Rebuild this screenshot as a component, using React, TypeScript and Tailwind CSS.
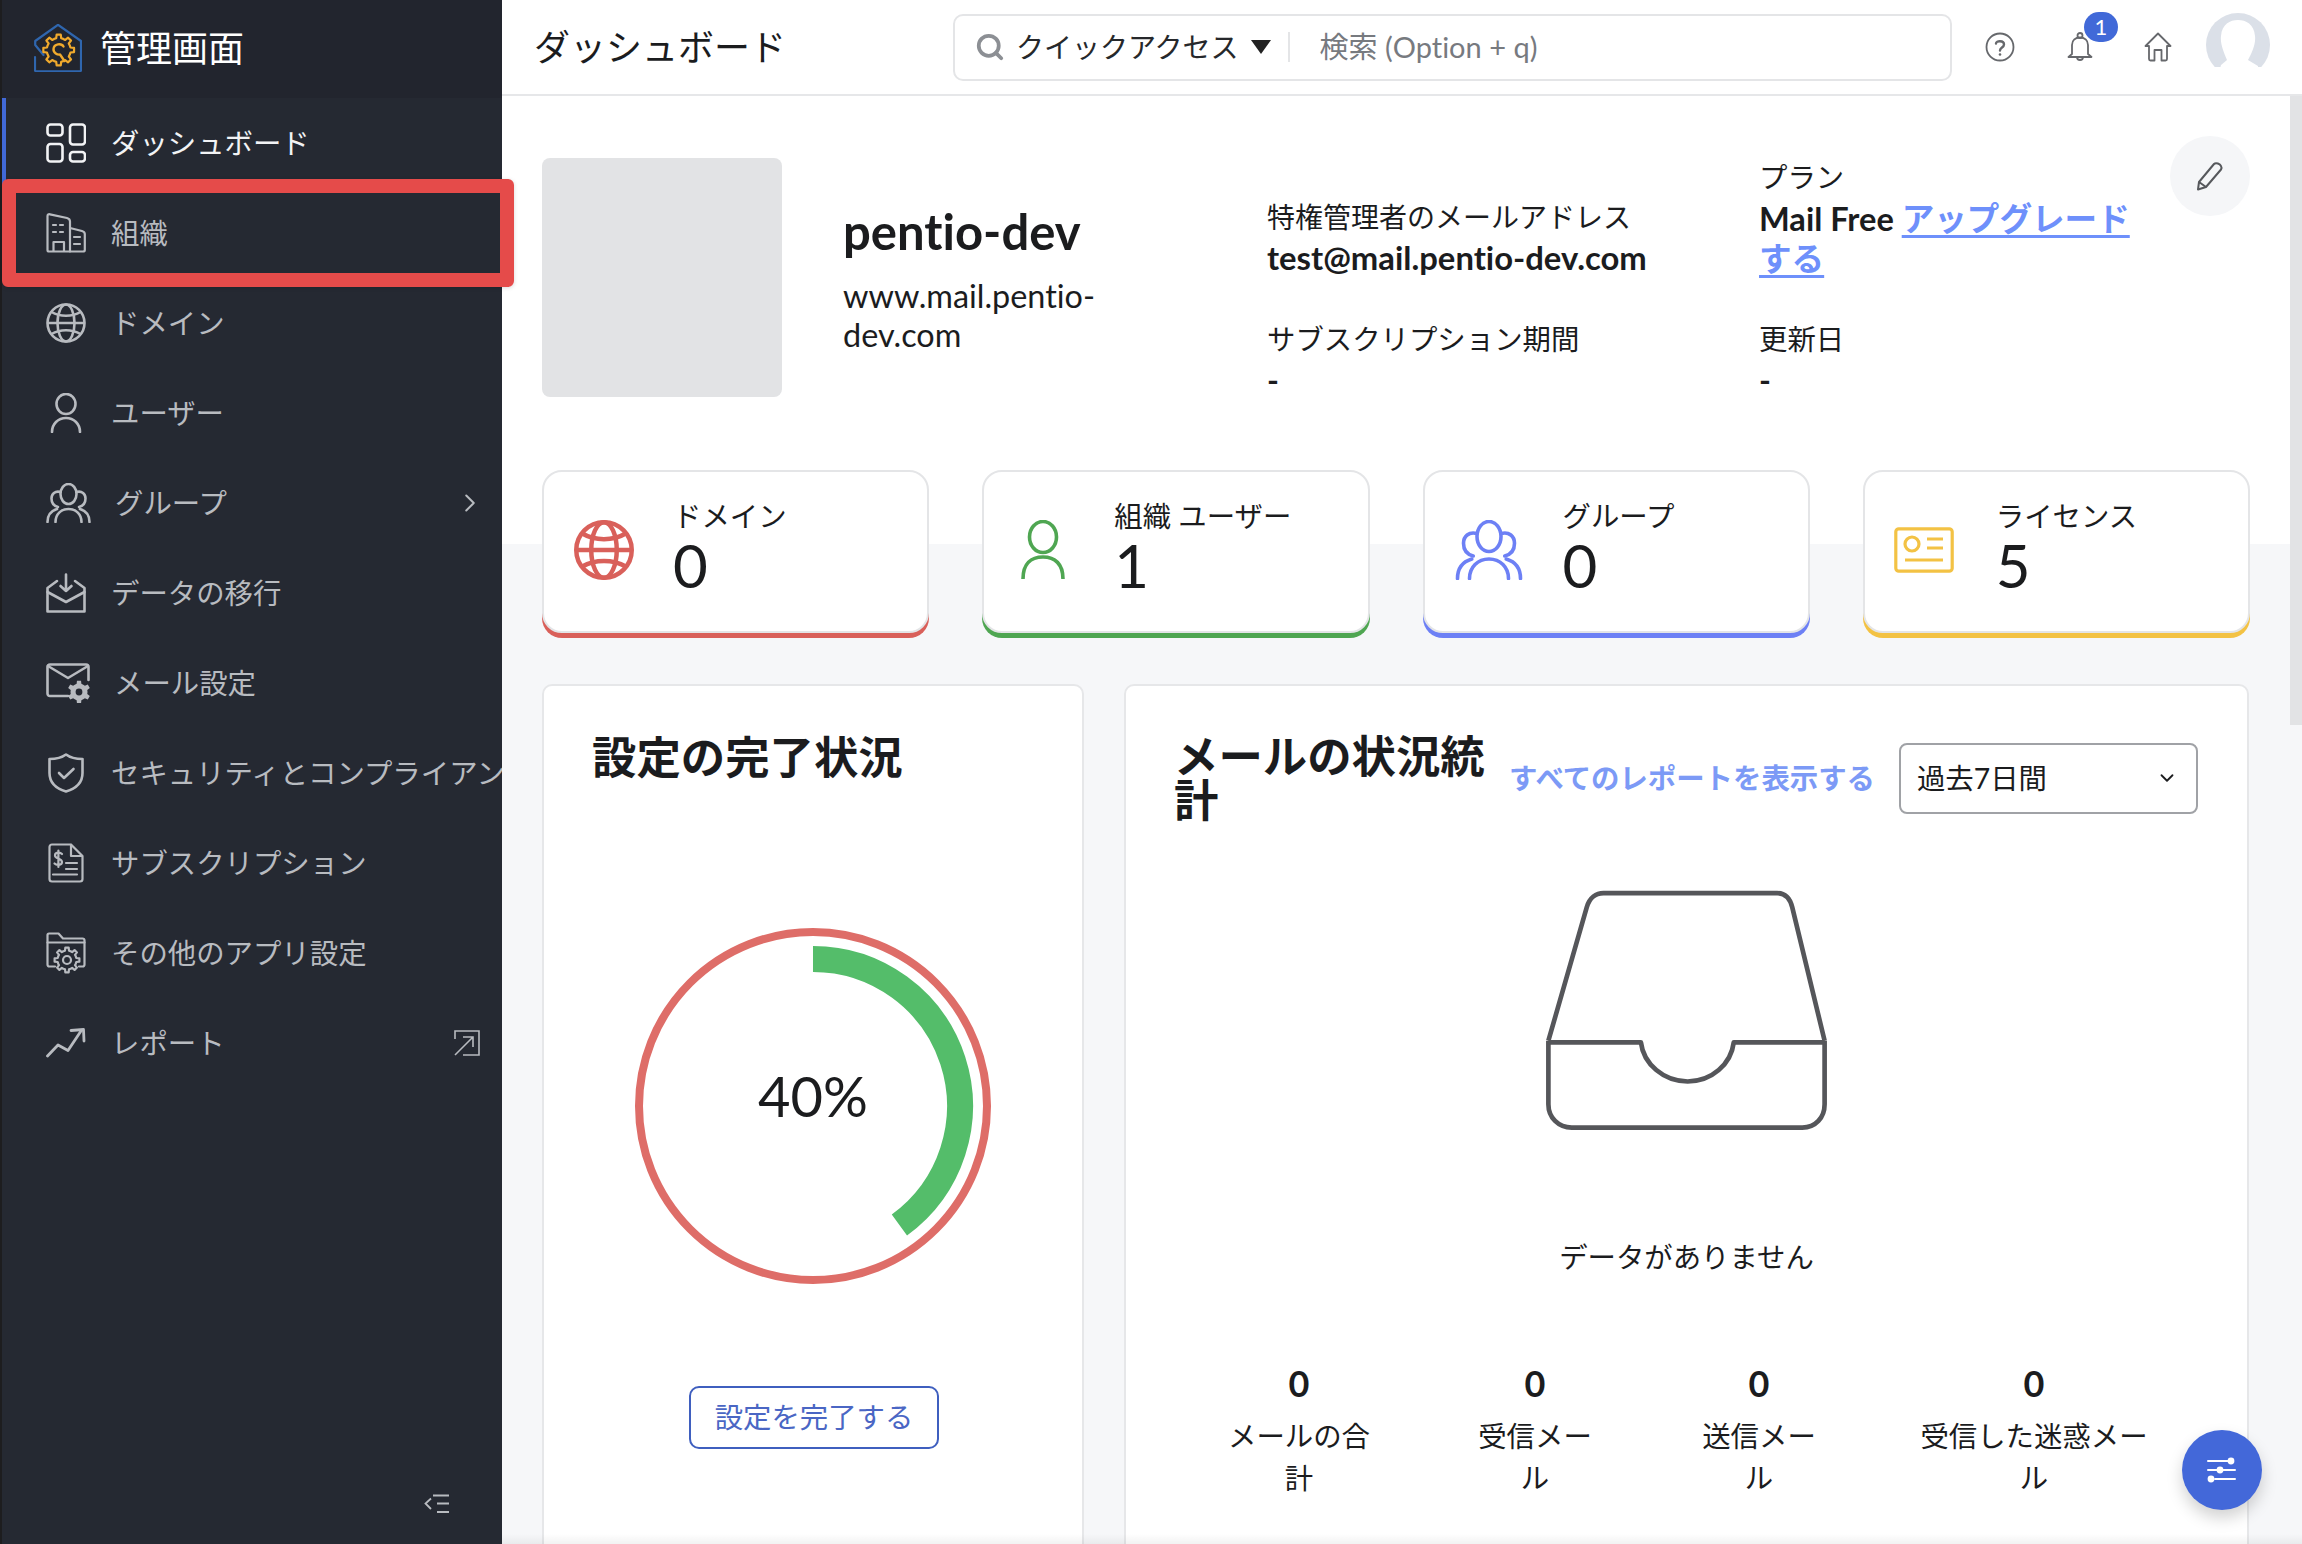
import React from 'react';
import { ChevronDown, ChevronRight, Search } from 'lucide-react';

type IconProps = { className?: string };

const gearPath = (cx: number, cy: number, outer: number, inner: number, teeth: number) => {
  const pts: string[] = [];
  const step = (Math.PI * 2) / teeth;
  for (let i = 0; i < teeth; i++) {
    const a = i * step;
    [
      [a - step * 0.5, inner],
      [a - step * 0.27, inner],
      [a - step * 0.17, outer],
      [a + step * 0.17, outer],
      [a + step * 0.27, inner],
    ].forEach(([ang, r]) => {
      pts.push(`${(cx + r * Math.sin(ang)).toFixed(2)} ${(cy - r * Math.cos(ang)).toFixed(2)}`);
    });
  }
  return `M${pts.join(' L')} Z`;
};

const Svg = ({ className, w = 40, h = 40, sw = 2.6, children }: IconProps & { w?: number; h?: number; sw?: number; children: React.ReactNode }) => (
  <svg width={w} height={h} viewBox={`0 0 ${w} ${h}`} fill="none" stroke="currentColor" strokeWidth={sw} strokeLinecap="round" strokeLinejoin="round" className={className}>
    {children}
  </svg>
);

const DashIcon = () => (
  <Svg>
    <rect x="1.5" y="1.5" width="15" height="11" rx="3" />
    <rect x="24" y="1.5" width="15" height="20" rx="3" />
    <rect x="1.5" y="21" width="15" height="17.5" rx="3" />
    <rect x="24" y="29" width="15" height="9.5" rx="3" />
  </Svg>
);

const BuildingIcon = () => (
  <Svg sw={2.2}>
    <path d="M1.5 3 C1.5 1.5 2.5 1 4 1.3 L21 5 C23 5.5 24 6.5 24 8.5 L24 38.5 L3 38.5 C2 38.5 1.5 38 1.5 37 Z" />
    <path d="M24 15 L36 18 C38 18.6 38.8 19.5 38.8 21 L38.8 37 C38.8 38 38 38.5 37 38.5 L24 38.5" />
    <path d="M7.5 38 V29 H18 V38" />
    <path d="M7 12 H10 M14 12 H17 M7 19 H10 M14 19 H17 M28 24 H34 M28 31 H34" />
  </Svg>
);

const GlobeIcon = ({ sw = 2.6, size = 40 }: { sw?: number; size?: number }) => (
  <svg width={size} height={size} viewBox="0 0 40 40" fill="none" stroke="currentColor" strokeWidth={sw}>
    <circle cx="20" cy="20" r="18.5" />
    <ellipse cx="20" cy="20" rx="8.5" ry="18.5" />
    <path d="M1.5 20 H38.5 M5.5 9 C14 14 26 14 34.5 9 M5.5 31 C14 26 26 26 34.5 31" />
  </svg>
);

const UserIcon = () => (
  <svg width="40" height="40" viewBox="0 0 40 40" fill="none" stroke="currentColor" strokeWidth="2.6" strokeLinecap="round">
    <ellipse cx="20" cy="11" rx="9.5" ry="10" />
    <path d="M6 39 C6 31 12 25 20 25 C28 25 34 31 34 39" />
  </svg>
);

const GroupIcon = ({ sw = 2.6, w = 45, h = 40 }: { sw?: number; w?: number; h?: number }) => (
  <svg width={w} height={h} viewBox="0 0 45 40" fill="none" stroke="currentColor" strokeWidth={sw} strokeLinecap="round">
    <ellipse cx="22.5" cy="11" rx="8" ry="10" />
    <path d="M14.5 9 C9 7.5 5.5 11 5.5 15.5 C5.5 20 8 23 12 24 M30.5 9 C36 7.5 39.5 11 39.5 15.500 C39.5 20 37 23 33 24" />
    <path d="M9.5 39 C9.5 31.5 15 26 22.5 26 C30 26 35.5 31.5 35.5 39" />
    <path d="M1.5 39 C1.5 33 4.5 28 11 26 M43.5 39 C43.5 33 40.5 28 34 26" />
  </svg>
);

const MigrateIcon = () => (
  <Svg>
    <path d="M20 1.5 V18 M14.5 13 L20 18 L25.5 13" />
    <path d="M11 8 L1.5 15 V38.5 H38.5 V15 L29 8" />
    <path d="M1.5 19 L20 29 L38.5 19" />
  </Svg>
);

const MailGearIcon = () => (
  <svg width="45" height="40" viewBox="0 0 45 40" fill="none" stroke="currentColor" strokeWidth="2.6" strokeLinecap="round" strokeLinejoin="round">
    <path d="M22 33 H4 C2.5 33 1.5 32 1.5 30.5 V4 C1.5 2.5 2.5 1.5 4 1.5 H40 C41.5 1.5 42.5 2.5 42.5 4 V17" />
    <path d="M2 3 L22 15 L42 3" />
    <path d={gearPath(33, 29, 11.5, 8.5, 6)} fill="currentColor" stroke="none" />
    <circle cx="33" cy="29" r="3.4" fill="#252932" stroke="none" />
  </svg>
);

const ShieldIcon = () => (
  <Svg>
    <path d="M20 1.5 C24 4.5 29 6 36.5 6 V20 C36.5 29 30 35.5 20 38.5 C10 35.5 3.5 29 3.5 20 V6 C11 6 16 4.5 20 1.5 Z" />
    <path d="M13 20 L18 25 L27.5 16" />
  </Svg>
);

const BillIcon = () => (
  <Svg sw={2.2}>
    <path d="M25 1.5 H6 C4.500 1.5 3.500 2.500 3.500 4 V36 C3.500 37.500 4.500 38.500 6 38.500 H34 C35.500 38.500 36.500 37.500 36.500 36 V13 L25 1.500 V13 H36.500" />
    <path d="M16 11 C14 9 9 9 9 12.500 C9 16 16 15 16 19 C16 22.500 10.500 22.500 8.500 20.500 M12.400 7.500 V24" />
    <path d="M20 20 H31 M20 26 H31 M7 31.500 H31" />
  </Svg>
);

const FolderGearIcon = () => (
  <svg width="40" height="42" viewBox="0 0 40 42" fill="none" stroke="currentColor" strokeWidth="2.2" strokeLinecap="round" strokeLinejoin="round">
    <path d="M9 34.500 H3.500 C2.300 34.500 1.500 33.700 1.500 32.500 V3 C1.500 2 2 1.500 3 1.500 H12.500 L17 6.500 H36.500 C37.700 6.500 38.500 7.300 38.500 8.500 V32.500 C38.500 33.700 37.700 34.500 36.500 34.500 H33" />
    <path d="M1.500 10.500 H38.500" />
    <path d={gearPath(21, 28, 12.500, 9.500, 8)} fill="#252932" />
    <circle cx="21" cy="28" r="4" />
  </svg>
);

const TrendIcon = () => (
  <svg width="40" height="30" viewBox="0 0 40 30" fill="none" stroke="currentColor" strokeWidth="2.8" strokeLinecap="round" strokeLinejoin="round">
    <path d="M1.500 28 L12 17 L22 22.500 L35 3" />
    <path d="M25 2.500 L37.500 1.500 L38 13" />
  </svg>
);

const ExternalIcon = () => (
  <svg width="26" height="26" viewBox="0 0 26 26" fill="none" stroke="currentColor" strokeWidth="1.600">
    <path d="M1 9 V1 H25 V25 H9" />
    <path d="M1 25 L19 7 M9 7 H19 V17" />
  </svg>
);

const CollapseIcon = () => (
  <svg width="26" height="20" viewBox="0 0 26 20" fill="none" stroke="currentColor" strokeWidth="1.800">
    <path d="M7 4.500 L1.500 9.500 L7 15 M9 1.500 H25 M13 9.500 H25 M13 18 H25" />
  </svg>
);

const Logo = () => (
  <svg width="48" height="48" viewBox="0 0 48 48" fill="none" strokeLinecap="round" strokeLinejoin="round" className="shrink-0">
    <path d="M9.500 31 L1.200 21 V17 L24 0.800 L47 17 V46 C47 47 46.500 47.300 45.500 47.300 H2.500 C1.500 47.300 1 47 1 46 V33" stroke="#2f66ae" strokeWidth="2.200" />
    <path d={gearPath(24.700, 26, 15.500, 12, 8)} fill="#22252e" stroke="#f0aa2d" strokeWidth="2.200" />
    <path d="M29.500 22.500 C27.500 19 20 19.500 19.500 25 C19.300 29 23.500 31 26 30.500 L30.500 37" stroke="#f0aa2d" strokeWidth="2.400" />
  </svg>
);

const menu = [
  { label: 'ダッシュボード', icon: <DashIcon />, active: true },
  { label: '組織', icon: <BuildingIcon /> },
  { label: 'ドメイン', icon: <GlobeIcon /> },
  { label: 'ユーザー', icon: <UserIcon /> },
  { label: 'グループ', icon: <GroupIcon />, gap: 'ml-[29px]', right: <ChevronRight size={30} strokeWidth={1.6} />, rightCls: 'mr-[17px]' },
  { label: 'データの移行', icon: <MigrateIcon /> },
  { label: 'メール設定', icon: <MailGearIcon />, gap: 'ml-[28px]' },
  { label: 'セキュリティとコンプライアンス', icon: <ShieldIcon /> },
  { label: 'サブスクリプション', icon: <BillIcon /> },
  { label: 'その他のアプリ設定', icon: <FolderGearIcon /> },
  { label: 'レポート', icon: <TrendIcon />, gap: 'ml-[25px]', right: <ExternalIcon />, rightCls: 'mr-[22px]' },
];

const stats = [
  { label: 'ドメイン', value: '0', bar: 'shadow-[0_5px_0_0_#d9605a]', color: 'text-[#d9605a]', pad: 'pl-[30px]', gap: 'gap-[39px]', icon: <GlobeIcon sw={3} size={60} /> },
  {
    label: '組織 ユーザー',
    value: '1',
    bar: 'shadow-[0_5px_0_0_#4fa652]',
    color: 'text-[#4fa652]',
    pad: 'pl-[37px]',
    gap: 'gap-[49px]',
    icon: (
      <svg width="44" height="60" viewBox="0 0 44 60" fill="none" stroke="currentColor" strokeWidth="3.600">
        <ellipse cx="22" cy="17" rx="13.500" ry="15.500" />
        <path d="M2 59 C2 44 10 37 22 37 C34 37 42 44 42 59" />
      </svg>
    ),
  },
  { label: 'グループ', value: '0', bar: 'shadow-[0_5px_0_0_#6d80f5]', color: 'text-[#6d80f5]', pad: 'pl-[30px]', gap: 'gap-[40px]', icon: <GroupIcon sw={2.400} w={68} h={60} /> },
  {
    label: 'ライセンス',
    value: '5',
    bar: 'shadow-[0_5px_0_0_#f3c244]',
    color: 'text-[#f3c244]',
    pad: 'pl-[29px]',
    gap: 'gap-[42px]',
    icon: (
      <svg width="60" height="46" viewBox="0 0 60 46" fill="none" stroke="currentColor" strokeWidth="3.200">
        <rect x="1.800" y="1.800" width="56.400" height="42.400" rx="3" />
        <circle cx="18" cy="17" r="7" />
        <path d="M33 12 H49 M33 21 H49 M11 33 H49" />
      </svg>
    ),
  },
];

const mailStats = [
  { label: 'メールの合計', cls: 'w-[146px]' },
  { label: '受信メール', cls: 'w-[118px] ml-[104px]' },
  { label: '送信メール', cls: 'w-[118px] ml-[106px]' },
  { label: '受信した迷惑メール', cls: 'w-[230px] ml-[101px]' },
];

const App = () => {
  return (
    <div className="relative flex h-[1544px] w-[2302px] overflow-hidden bg-white font-['Lato','Noto_Sans_CJK_JP',sans-serif] text-[28.4px] text-[#1b1c1e] [font-variant-ligatures:none]">
      {/* Sidebar */}
      <aside className="flex h-full w-[502px] shrink-0 flex-col border-l-2 border-[#1d1d1f] bg-[#252932] text-[#b8bbc0]">
        <div className="flex h-[98px] shrink-0 items-center gap-[18px] bg-[#22252e] pb-[2px] pl-[32px] text-[36px] text-white">
          <Logo />
          <span>管理画面</span>
        </div>
        <nav className="flex-1 overflow-hidden">
          {menu.map((item) => (
            <div key={item.label} className={`flex h-[90px] items-center pl-[44px] ${item.active ? 'relative text-[#f2f3f5]' : ''}`}>
              {item.active && <div className="absolute bottom-0 left-0 top-0 w-[4px] bg-[#4169d8]" />}
              <span className="flex w-[40px] shrink-0 justify-start [&>svg]:shrink-0">{item.icon}</span>
              <span className={`whitespace-nowrap ${item.gap ?? 'ml-[25px]'}`}>{item.label}</span>
              {item.right && <span className={`ml-auto flex ${item.rightCls}`}>{item.right}</span>}
            </div>
          ))}
        </nav>
        <div className="flex justify-end pb-[30px] pr-[52px]">
          <CollapseIcon />
        </div>
      </aside>

      {/* Highlight annotation */}
      <div className="absolute left-[2px] top-[179px] h-[108px] w-[512px] rounded-[6px] border-[14px] border-[#e54b4a] shadow-[0_1px_4px_rgba(0,0,0,0.15)]" />

      <div className="flex h-full min-w-0 flex-1 flex-col">
        {/* Header */}
        <header className="flex h-[96px] shrink-0 items-center border-b-2 border-[#e6e7e9] pl-[32px]">
          <h1 className="w-[419px] text-[36px] font-normal">ダッシュボード</h1>
          <div className="flex h-[67px] w-[999px] items-center rounded-[10px] border-2 border-[#e4e5e7] pl-[20px]">
            <Search size={30} strokeWidth={3} className="text-[#8c8f94]" />
            <span className="ml-[11px] text-[28px] text-[#26282b]">クイックアクセス</span>
            <span className="ml-[12px] h-0 w-0 border-x-[10px] border-t-[14px] border-x-transparent border-t-[#222]" />
            <span className="ml-[17px] h-[30px] w-[2px] bg-[#e4e5e7]" />
            <span className="ml-[30px] text-[29px] text-[#777a7f]">検索 (Option + q)</span>
          </div>
          <svg width="30" height="30" viewBox="0 0 30 30" fill="none" stroke="#66686c" strokeWidth="1.800" strokeLinecap="round" className="ml-[33px] mt-[-1px]">
            <circle cx="15" cy="15" r="13.500" />
            <path d="M11 11.500 C11 8.500 19 8 19 12.500 C19 15.500 15 15.500 15 18.500" strokeWidth="2.400" />
            <circle cx="15" cy="22.500" r="1.300" fill="#66686c" stroke="none" />
          </svg>
          <div className="relative ml-[52px] h-[30px] w-[26px]">
            <svg width="26" height="30" viewBox="0 0 26 30" fill="none" stroke="#66686c" strokeWidth="1.800" strokeLinejoin="round">
              <circle cx="13" cy="3.500" r="2.500" />
              <path d="M5 22 V13 C5 8 8.500 5.500 13 5.500 C17.500 5.500 21 8 21 13 V22 L24.500 25 H1.500 Z" />
              <path d="M10 25 C10 29 16 29 16 25" />
            </svg>
            <span className="absolute left-[17px] top-[-20px] flex h-[30px] w-[34px] items-center justify-center rounded-full bg-[#4169d8] text-[22px] leading-none text-white">1</span>
          </div>
          <svg width="28" height="30" viewBox="0 0 28 30" fill="none" stroke="#66686c" strokeWidth="1.800" strokeLinejoin="round" className="ml-[51px]">
            <path d="M14 1.500 L1.500 14 H5 V27 C5 28 5.500 28.500 6.500 28.500 H10.500 V18 H17.500 V28.500 H21.500 C22.500 28.500 23 28 23 27 V14 H26.500 Z" />
          </svg>
          <svg width="64" height="54" viewBox="0 0 64 54" className="ml-[34px] mt-[-14px]">
            <circle cx="32" cy="32" r="32" fill="#dbe0e8" />
            <path d="M15 52 L21 47 C18 40 14 31 15 23 C16 11 24 7 32 7 C40 7 48 11 49 23 C50 31 46 40 42 47 L52 53 L52 64 L12 64 Z" fill="#fff" />
          </svg>
        </header>

        <div className="flex min-h-0 flex-1 bg-[linear-gradient(#fff_0,#fff_448px,#f6f7f9_448px)]">
          {/* Page content */}
          <main className="min-w-0 flex-1 overflow-hidden pl-[40px] pr-[40px] pt-[40px]">
            <section className="flex h-[261px]">
              <div className="mt-[22px] h-[239px] w-[240px] shrink-0 rounded-[8px] bg-[#e2e3e5]" />
              <div className="ml-[61px] mt-[68px] w-[300px]">
                <h2 className="text-[49px] font-bold leading-[54px]">pentio-dev</h2>
                <p className="mt-[18px] text-[32.4px] leading-[39px]">www.mail.pentio-dev.com</p>
              </div>
              <div className="ml-[124px] mt-[61px] w-[492px]">
                <p className="text-[28px] leading-[40px]">特権管理者のメールアドレス</p>
                <p className="mt-[1px] text-[32.8px] font-bold leading-[40px]">test@mail.pentio-dev.com</p>
                <p className="mt-[41px] leading-[40px]">サブスクリプション期間</p>
                <p className="mt-[1px] text-[32px] font-bold leading-[40px]">-</p>
              </div>
              <div className="mt-[21px] w-[390px]">
                <p className="leading-[40px]">プラン</p>
                <p className="mt-[2px] text-[32.6px] font-bold leading-[40px]">
                  Mail Free <a className="text-[#6e90fb] underline underline-offset-[4px]">アップグレードする</a>
                </p>
                <p className="mt-[40px] leading-[40px]">更新日</p>
                <p className="mt-[1px] text-[32px] font-bold leading-[40px]">-</p>
              </div>
              <button className="ml-auto flex h-[80px] w-[80px] shrink-0 items-center justify-center rounded-full bg-[#f5f6f8]">
                <svg width="28" height="30" viewBox="0 0 28 30" fill="none" stroke="#56585c" strokeWidth="2" strokeLinejoin="round">
                  <path d="M3 21 L18 3 C20 1 24 3 25 5 C26 6.500 25.500 7.500 25 8.500 L10 26 L2 28.500 Z M3 21 L10 26" />
                </svg>
              </button>
            </section>

            {/* Stat cards */}
            <section className="mt-[73px] grid grid-cols-4 gap-[53px]">
              {stats.map((s) => (
                <div key={s.label} className={`flex h-[163px] items-center rounded-[20px] border-2 border-[#e4e5e7] bg-white ${s.bar} ${s.pad} ${s.gap}`}>
                  <span className={`mt-[-4px] flex shrink-0 ${s.color}`}>{s.icon}</span>
                  <div className="mt-[-7px]">
                    <p className="leading-[36px]">{s.label}</p>
                    <p className="mt-[-3px] text-[60px] leading-[68px]">{s.value}</p>
                  </div>
                </div>
              ))}
            </section>

            <section className="mt-[51px] flex gap-[40px]">
              {/* Setup progress */}
              <div className="flex h-[900px] w-[542px] shrink-0 flex-col rounded-[10px] border-2 border-[#e6e7e9] bg-white">
                <h3 className="ml-[48px] mt-[43px] text-[44.4px] font-bold leading-[56px]">設定の完了状況</h3>
                <div className="relative mx-auto mt-[141px] h-[360px] w-[360px]">
                  <svg width="360" height="360" viewBox="0 0 360 360" fill="none">
                    <circle cx="180" cy="180" r="174" stroke="#de6d68" strokeWidth="8" />
                    <path d="M180 33 A147 147 0 0 1 266.400 298.900" stroke="#54bd6a" strokeWidth="26" />
                  </svg>
                  <span className="absolute inset-x-0 top-[138px] text-center text-[56px] leading-[64px]">40%</span>
                </div>
                <button className="ml-[145px] mt-[100px] h-[63px] w-[250px] rounded-[10px] border-2 border-[#3f5fbf] text-[#4a66c4]">設定を完了する</button>
              </div>

              {/* Mail stats */}
              <div className="mr-[1px] flex h-[900px] flex-1 flex-col rounded-[10px] border-2 border-[#e6e7e9] bg-white">
                <div className="ml-[48px] mt-[48px] flex items-center">
                  <h3 className="w-[312px] text-[44.4px] font-bold leading-[44px]">メールの状況統計</h3>
                  <a className="ml-[23px] whitespace-nowrap font-bold text-[#7c9af6]">すべてのレポートを表示する</a>
                  <div className="ml-[24px] flex h-[71px] w-[299px] items-center justify-between rounded-[8px] border-2 border-[#a0a2a6] pl-[16px] pr-[18px]">
                    <span>過去7日間</span>
                    <ChevronDown size={22} strokeWidth={2} />
                  </div>
                </div>
                <svg width="334" height="284" viewBox="0 0 1000 848" fill="none" stroke="#55565a" strokeWidth="14" strokeLinejoin="round" className="mx-auto mt-[48px] shrink-0">
                  <path d="M85 510 L200 110 C208 82 228 68 250 68 H770 C792 68 808 82 815 110 L912 510" />
                  <path d="M85 510 V700 C85 740 115 770 155 770 H845 C885 770 912 740 912 700 V510" />
                  <path d="M85 515 H362 C370 580 430 632 502 632 C574 632 632 580 640 515 H912" />
                </svg>
                <p className="mt-[83px] text-center leading-[40px]">データがありません</p>
                <div className="ml-[100px] mt-[82px] flex items-start">
                  {mailStats.map((m) => (
                    <div key={m.label} className={`text-center ${m.cls}`}>
                      <p className="text-[36px] font-bold leading-[48px]">0</p>
                      <p className="mt-[8px] leading-[42px]">{m.label}</p>
                    </div>
                  ))}
                </div>
              </div>
            </section>
          </main>

          {/* Scrollbar */}
          <div className="w-[12px] shrink-0">
            <div className="h-[629px] bg-[#e2e3e5]" />
          </div>
        </div>
      </div>

      {/* Floating settings button */}
      <button className="absolute left-[2182px] top-[1430px] flex h-[80px] w-[80px] items-center justify-center rounded-full bg-[#4368d9] shadow-[0_8px_16px_rgba(0,0,0,0.18)]">
        <svg width="30" height="26" viewBox="0 0 30 26" fill="none" stroke="#fff" strokeWidth="2" strokeLinecap="round">
          <path d="M1 4 H22 M1 13 H28 M8 22 H28" />
          <circle cx="24" cy="4" r="3.400" fill="#fff" stroke="none" />
          <circle cx="13" cy="13" r="3.400" fill="#fff" stroke="none" />
          <circle cx="4" cy="22" r="3.400" fill="#fff" stroke="none" />
        </svg>
      </button>

      {/* Bottom fade */}
      <div className="pointer-events-none absolute bottom-0 left-[502px] right-0 h-[10px] bg-[linear-gradient(transparent,rgba(0,0,0,0.05))]" />
    </div>
  );
};

export default App;
